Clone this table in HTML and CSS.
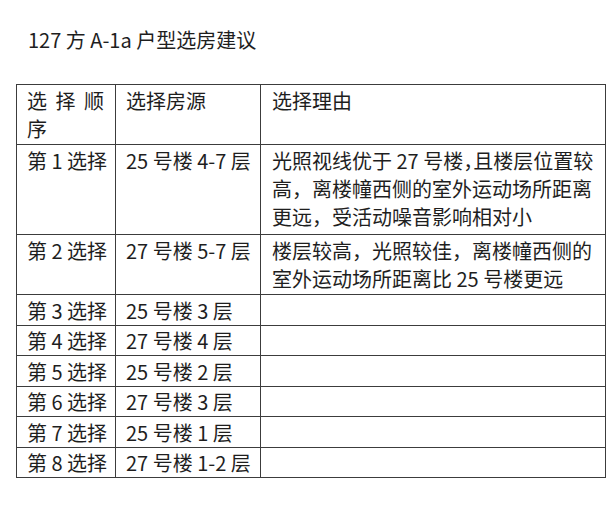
FILE: index.html
```html
<!DOCTYPE html>
<html lang="zh-CN">
<head>
<meta charset="utf-8">
<title>127 方 A-1a 户型选房建议</title>
<link rel="stylesheet" href="styles.css">
</head>
<body>
<div class="page">
  <h1 class="title">127 方 A-1a 户型选房建议</h1>
  <table class="plan">
    <colgroup><col class="c1"><col class="c2"><col class="c3"></colgroup>
    <tr class="r2">
      <td><span class="spread">选择顺</span><br>序</td>
      <td>选择房源</td>
      <td>选择理由</td>
    </tr>
    <tr class="r3">
      <td>第 1 选择</td>
      <td>25 号楼 4-7 层</td>
      <td>光照视线优于 27 号楼<span class="halt">，</span>且楼层位置较<br>高，离楼幢西侧的室外运动场所距离<br>更远，受活动噪音影响相对小</td>
    </tr>
    <tr class="r2">
      <td>第 2 选择</td>
      <td>27 号楼 5-7 层</td>
      <td>楼层较高，光照较佳，离楼幢西侧的<br>室外运动场所距离比 25 号楼更远</td>
    </tr>
    <tr class="r1"><td>第 3 选择</td><td>25 号楼 3 层</td><td></td></tr>
    <tr class="r1"><td>第 4 选择</td><td>27 号楼 4 层</td><td></td></tr>
    <tr class="r1"><td>第 5 选择</td><td>25 号楼 2 层</td><td></td></tr>
    <tr class="r1"><td>第 6 选择</td><td>27 号楼 3 层</td><td></td></tr>
    <tr class="r1"><td>第 7 选择</td><td>25 号楼 1 层</td><td></td></tr>
    <tr class="r1"><td>第 8 选择</td><td>27 号楼 1-2 层</td><td></td></tr>
  </table>
</div>
</body>
</html>
```

FILE: styles.css
```css
html, body {
  margin: 0;
  padding: 0;
  background: #ffffff;
}

body {
  font-family: "Noto Sans CJK SC", "Noto Sans", sans-serif;
  color: #1e1e1e;
}

.page {
  padding: 26px 0 0 16px;
}

.title {
  margin: 0 0 30px 12px;
  font-size: 20px;
  line-height: 28px;
  font-weight: 400;
}

.plan {
  border-collapse: collapse;
  width: 589px;
  table-layout: fixed;
}

.c1 { width: 99px; }
.c2 { width: 145px; }
.c3 { width: 345px; }

.plan td {
  border: 1px solid #3c3c3c;
  padding: 1.5px 10px 0 10px;
  vertical-align: top;
  font-size: 20px;
  line-height: 28px;
  white-space: nowrap;
  overflow: hidden;
}

.plan td:nth-child(3) {
  padding-left: 11px;
}

.r1 { height: 30.5px; }
.r2 { height: 60px; }
.r3 { height: 90px; }

.spread {
  letter-spacing: 8.5px;
}

.halt {
  font-feature-settings: "halt";
}
```
